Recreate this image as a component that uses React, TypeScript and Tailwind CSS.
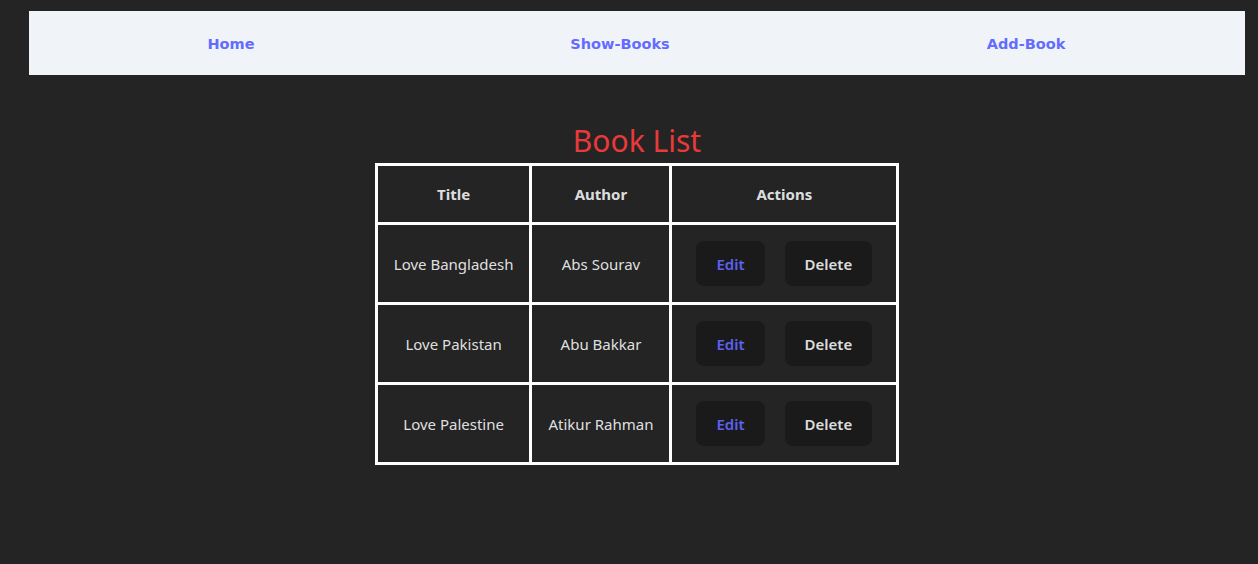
import React from "react";

const books = [
  { title: "Love Bangladesh", author: "Abs Sourav" },
  { title: "Love Pakistan", author: "Abu Bakkar" },
  { title: "Love Palestine", author: "Atikur Rahman" },
];

export default function App() {
  return (
    <div
      className="min-h-[564px] w-full bg-[#242424] pt-[11px] text-[rgba(255,255,255,0.87)]"
      style={{ fontFamily: '"Noto Sans", "Open Sans", sans-serif' }}
    >
      <div className="ml-[29px] w-[1216px]">
        <nav className="grid h-[64px] grid-cols-[404px_374px_1fr] items-center bg-[#f0f4f9]">
          {["Home", "Show-Books", "Add-Book"].map((t) => (
            <a
              key={t}
              href="#"
              className="pt-[4px] text-center text-[14.5px] font-bold text-[#646cff]"
              style={{ fontFamily: '"DejaVu Sans", Verdana, sans-serif' }}
            >
              {t}
            </a>
          ))}
        </nav>
        <h1 className="mt-[46px] text-center text-[30px] font-normal leading-[40px] text-[#e83a3a]">
          Book List
        </h1>
        <div className="mt-[2px] flex justify-center">
          <table className="border-collapse border-[3px] border-white text-[15px]">
            <thead>
              <tr>
                <th className="border-[3px] border-white px-4 py-4 font-bold leading-6">Title</th>
                <th className="border-[3px] border-white px-4 py-4 font-bold leading-6">Author</th>
                <th className="border-[3px] border-white px-4 py-4 font-bold leading-6">Actions</th>
              </tr>
            </thead>
            <tbody>
              {books.map((b) => (
                <tr key={b.title}>
                  <td className="border-[3px] border-white px-4 py-4 text-center leading-6">{b.title}</td>
                  <td className="border-[3px] border-white px-4 py-4 text-center leading-6">{b.author}</td>
                  <td className="border-[3px] border-white px-6 py-4">
                    <div className="flex justify-center gap-5">
                      <button className="rounded-lg border border-transparent bg-[#1a1a1a] px-[19px] py-[9.5px] text-[15px] font-semibold leading-6 text-[#5b62f0]">
                        Edit
                      </button>
                      <button className="rounded-lg border border-transparent bg-[#1a1a1a] px-[19px] py-[9.5px] text-[15px] font-semibold leading-6 text-[rgba(255,255,255,0.87)]">
                        Delete
                      </button>
                    </div>
                  </td>
                </tr>
              ))}
            </tbody>
          </table>
        </div>
      </div>
    </div>
  );
}
